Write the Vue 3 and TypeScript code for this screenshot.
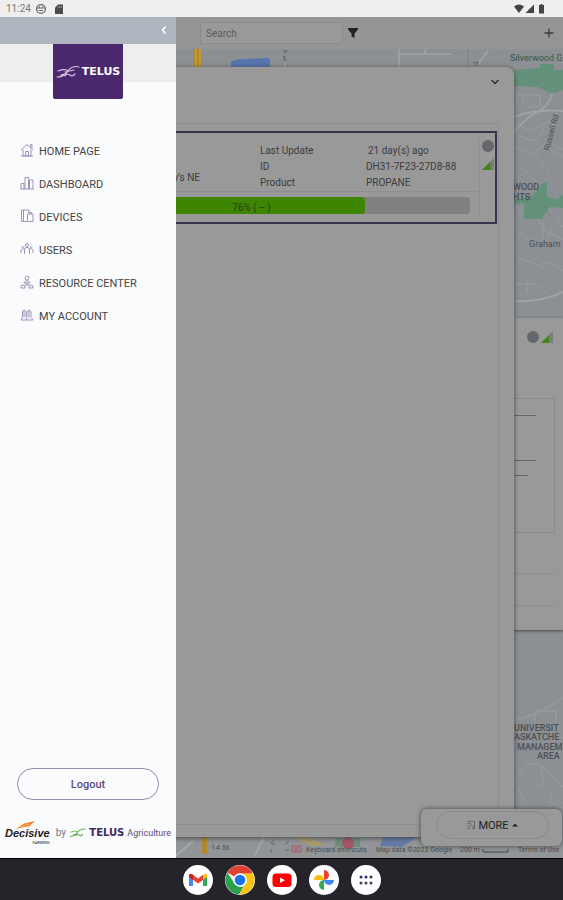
<script setup lang="ts">
import { ref } from 'vue'

interface MenuItem {
  label: string
  icon: string
}

const menu: MenuItem[] = [
  { label: 'HOME PAGE', icon: 'M1 7 7 1.500 13 7M10.500 4V1.500H12V5.500M3 6.500V13H11V6.500M5.500 13V8.500H8.500V13M1 13H13' },
  { label: 'DASHBOARD', icon: 'M1 13V7.500H4V13M5 13V1.500H8.500V13M9.500 13V4H13V13M0 13H14' },
  { label: 'DEVICES', icon: 'M7 12.500H1.500V1H9V4M3.500 1V12M7.500 5H13V12.500H7.500ZM9 5V3.500H11.500V5' },
  { label: 'USERS', icon: 'M5.500 3A1.500 1.500 0 1 0 8.500 3A1.500 1.500 0 1 0 5.500 3M4.500 12V8L5 6Q7 4.500 9 6L9.500 8V12M2 4.500A1 1 0 1 0 4 4.500M10 4.500A1 1 0 1 0 12 4.500M1 11V8Q2 6 4 7M13 11V8Q12 6 10 7' },
  { label: 'RESOURCE CENTER', icon: 'M5 3A2 2 0 1 0 9 3A2 2 0 1 0 5 3M4 7.500Q7 4 10 7.500V8H4ZM7 8V10M1 13V11Q3 9 5 11V13ZM9 13V11Q11 9 13 11V13ZM5 10H9' },
  { label: 'MY ACCOUNT', icon: 'M1 12 2.500 9V4Q4 0 6 4V9L6.500 12ZM7 9V4Q9 0 11 4V9M7 12H13L11 9.500M9 3V10M4 3V9' },
]

const device = {
  address: "y's NE",
  updated: '21 day(s) ago',
  id: 'DH31-7F23-27D8-88',
  product: 'PROPANE',
  level: 76,
}

const query = ref('')
</script>

<template>
  <div class="screen">
    <header class="status">
      <span class="clock">11:24</span>
      <svg class="status-icon" viewBox="0 0 12 12"><circle cx="6" cy="6" r="4.400" fill="none" stroke="#666" stroke-width="1.300" /><path d="M2 5H10M4 7.500H8M4.500 3.500V5M7.500 3.500V5" stroke="#666" fill="none" /></svg>
      <svg class="status-icon card-icon" viewBox="0 0 12 12"><path d="M5 1.500H10V11H2V4.500Z" fill="#4b4b4b" /><path d="M5 3V5M6.700 3V5M8.400 3V5" stroke="#aaa" stroke-width=".7" /></svg>
      <svg class="signals" viewBox="0 0 34 12"><path d="M1 3.500Q6 -.5 11 3.500L6 10Z" fill="#444" /><path d="M21 1.500V10H12.500Z" fill="#444" /><path d="M26 2H27.500V1H29.500V2H31V10.500H26Z" fill="#444" /></svg>
    </header>

    <main class="stage">
      <svg class="map" viewBox="0 0 563 841" preserveAspectRatio="xMaxYMin slice">
        <rect width="563" height="841" fill="#8c9094" />
        <path d="M193 32H202V50H193Z" fill="#b28a2c" />
        <path d="M196 32V50M200 32V50" stroke="#d0a63d" stroke-width="1" />
        <path d="M231 50V45Q235 42 246 42L268 41 270 43V50Z" fill="#5874ad" />
        <path d="M285 50V46M399 50V32M399 37H452M425 37V32M477 48 488 34" stroke="#a0a3a6" stroke-width="1.500" fill="none" />
        <path d="M283 34H287L284 37M283 40H286M284 40V43H287M473 46 478 45 476 49" stroke="#5c5f63" fill="none" />
        <path d="M468 32V50" stroke="#7d8185" />
        <path d="M514 53 540 51V47H554V53H563V73L552 77 538 70 514 69Z" fill="#64917a" />
        <path d="M514 100Q535 92 563 94M514 115Q524 103 534 97 551 88 552 76M514 284Q540 286 563 275" stroke="#a0a3a5" stroke-width="2" fill="none" />
        <path d="M517 87V78H540V90M523 80V86M528 90H538M514 107 530 113 551 104M518 119 535 124 544 113M514 130 530 137 543 129 563 139M536 139 550 155M552 127 563 132M522 151 536 164M543 205V221L534 234M553 211 547 222M517 214 535 225M518 240 545 251M541 246H553M516 267H535L547 276M552 246 563 254M527 264V276M555 197 563 210M516 190 536 200 545 214 563 222" stroke="#999da0" fill="none" />
        <path d="M514 182 533 178 543 166 547 165V180L557 182 563 178V191L549 190 542 202H524V186L514 187Z" fill="#64917a" />
        <path d="M514 184H530L540 178 546 191 550 200" stroke="#55816c" stroke-dasharray="2 2" fill="none" />
        <text x="510" y="44" class="green">Silverwood G</text>
        <text x="513" y="173" class="area">WOOD</text>
        <text x="513" y="183" class="area">HTS</text>
        <text x="529" y="230">Graham</text>
        <text x="549" y="134" class="road" transform="rotate(-75 549 134)">Russell Rd</text>
        <path d="M514 704 540 695 563 681M514 700 526 702M535 704V694H556V704M514 763 529 746 541 748 563 770M541 748 543 766 534 771M553 775 549 785 563 791M517 770 525 785" stroke="#9a9da0" fill="none" stroke-width="1" />
        <text x="514" y="714" class="area">UNIVERSIT</text>
        <text x="514" y="723" class="area">ASKATCHE</text>
        <text x="517" y="733" class="area">MANAGEM</text>
        <text x="537" y="742" class="area">AREA</text>
        <rect y="820" width="563" height="21" fill="#929597" />
        <path d="M202 820H207V837H202Z" fill="#b28a2c" />
        <path d="M292 820H310L326 829H312Z" fill="#a99a69" /><path d="M335 821H360V830H335Z" fill="#708d7b" /><circle cx="348" cy="826" r="6" fill="#a65666" /><path d="M383 820H417L402 830 380 829Z" fill="#657ba7" />
        <path d="M176 839 193 824M255 838 264 820" stroke="#a5a5a5" stroke-width="2" />
        <text x="211" y="833" class="tiny">14 St</text>
        <path d="M275 822 271 826 275 828M271 832V836M289 824 285 828M285 833H289" stroke="#666" fill="none" />
        <path d="M292 829H301V835H292ZM294 831H299M294 833H299" stroke="#a65666" fill="none" />
        <text x="306" y="835" class="legal">Keyboard shortcuts</text>
        <text x="376" y="835" class="legal">Map data ©2023 Google</text>
        <text x="460" y="835" class="legal">200 m</text>
        <path d="M483 832V835H508V832" stroke="#444" fill="none" />
        <text x="518" y="835" class="legal">Terms of Use</text>
      </svg>

      <div class="detail-layer">
        <section class="detail">
          <div class="detail-head">
            <i class="dot" />
            <svg class="bars" viewBox="0 0 12 12"><path d="M12 0V12H0Z" fill="#7d7d7d" /><path d="M8 4V12H0Z" fill="#3f8519" /></svg>
          </div>
          <div class="detail-box"><i class="rule" /><i class="rule second" /><i class="rule short" /></div>
          <div class="detail-row first" />
          <div class="detail-row" />
        </section>
      </div>

      <div class="page">
        <div class="toolbar">
          <input v-model="query" class="search" type="text" placeholder="Search" aria-label="Search" />
          <button class="icon-btn" type="button" aria-label="Filter"><svg viewBox="0 0 12 12"><path d="M1 1H11V2.500L7.500 6.500V11L4.500 9.500V6.500L1 2.500Z" fill="#222" /></svg></button>
          <button class="icon-btn add" type="button" aria-label="Add"><svg viewBox="0 0 12 12"><path d="M6 1.500V10.500M1.500 6H10.500" stroke="#3c3c3c" stroke-width="1.300" /></svg></button>
        </div>

        <section class="panel">
          <div class="panel-head">
            <button class="icon-btn" type="button" aria-label="Collapse"><svg viewBox="0 0 12 12"><path d="M2.500 4 6 7.500 9.500 4" stroke="#303030" stroke-width="1.500" fill="none" /></svg></button>
          </div>
          <div class="list">
            <article class="card">
              <div class="card-main">
                <div class="facts">
                  <div class="address">{{ device.address }}</div>
                  <dl>
                    <dt>Last Update</dt><dd class="when">{{ device.updated }}</dd>
                    <dt>ID</dt><dd>{{ device.id }}</dd>
                    <dt>Product</dt><dd>{{ device.product }}</dd>
                  </dl>
                </div>
                <div class="gauge-row">
                  <div class="gauge">
                    <div class="fill" :style="{ width: device.level + '%' }" />
                    <span>{{ device.level }}% ( -- )</span>
                  </div>
                </div>
              </div>
              <div class="card-side">
                <i class="dot" />
                <svg class="bars" viewBox="0 0 12 12"><path d="M12 0V12H0Z" fill="#81767f" /><path d="M8.500 3.500V12H0Z" fill="#3f8519" /></svg>
              </div>
            </article>
          </div>
        </section>
      </div>

      <div class="more-layer">
        <div class="more-card">
          <button class="more" type="button">
            <svg class="more-icon" viewBox="0 0 8 8"><path d="M.5 .5H7.500V7.500H5M.5 2.500H3.500L7 7M.5 5H3M.5 7.500H3" stroke="#555" stroke-width=".7" fill="none" /></svg>
            MORE
            <svg class="caret" viewBox="0 0 6 4"><path d="M0 3.500 3 .5 6 3.500Z" fill="#222" /></svg>
          </button>
        </div>
      </div>

      <aside class="drawer">
        <div class="drawer-bar">
          <button class="icon-btn" type="button" aria-label="Close menu"><svg viewBox="0 0 12 12"><path d="M7.500 2.500 4.500 6 7.500 9.500" stroke="#fff" stroke-width="1.600" fill="none" /></svg></button>
        </div>
        <div class="brand-band">
          <div class="brand">
            <svg class="swoosh" viewBox="0 0 24 14"><path d="M2 6Q7 4 11 5 13 6 9 9 6 12 1 12M5 10Q11 8 14 10 16 12 19 9M9 11Q12 4 17 2 20 1 23 2M9 7 18 5" stroke="#d6c3e1" stroke-width="1.200" fill="none" stroke-linecap="round" /></svg>
            <span>TELUS</span>
          </div>
        </div>
        <nav class="menu">
          <a v-for="item in menu" :key="item.label" href="#">
            <svg viewBox="0 0 14 14"><path :d="item.icon" fill="none" stroke="#a093b8" /></svg>
            <span>{{ item.label }}</span>
          </a>
        </nav>
        <div class="drawer-foot">
          <button class="logout" type="button">Logout</button>
          <div class="credit">
            <div class="decisive">
              <svg viewBox="0 0 20 8"><path d="M0 8 8 2.500 19 0 13 5.500 8 6Z" fill="#ee8136" /><path d="M4 6 13 3" stroke="#f7b13c" /></svg>
              <b>Decisive</b>
              <small>FARMING</small>
            </div>
            <span class="by">by</span>
            <svg class="swoosh" viewBox="0 0 24 14"><path d="M2 6Q7 4 11 5 13 6 9 9 6 12 1 12" stroke="#83c464" stroke-width="1.500" fill="none" /><path d="M5 10Q11 8 14 10 16 12 19 9M9 11Q12 4 17 2 20 1 23 2" stroke="#58a844" stroke-width="1.400" fill="none" /></svg>
            <b class="telus">TELUS</b>
            <span class="agri">Agriculture</span>
          </div>
        </div>
      </aside>
    </main>

    <footer class="dock">
      <button type="button" aria-label="Gmail"><svg viewBox="0 0 30 30"><path d="M6 11V21H10V14Z" fill="#4285f4" /><path d="M24 11V21H20V14Z" fill="#34a853" /><path d="M20 10.500 22 8.500Q24 8 24 11V12L20 15Z" fill="#fbbc04" /><path d="M6 12V10.500Q6.500 8 9 9L15 13.500 20 9.800V15L15 18.500Z" fill="#ea4335" /><path d="M6 12V10.500Q6.500 8 10 9.800V15Z" fill="#c5221f" /></svg></button>
      <button type="button" aria-label="Chrome"><svg viewBox="0 0 30 30"><path d="M15 15 2.400 7.500A14.500 14.500 0 0 1 28 8.500L15 9Z" fill="#df4135" /><path d="M15 8.500H28A14.500 14.500 0 0 1 14 29.500L20.600 18Z" fill="#fbc318" /><path d="M2.400 7.500 9.400 18.200 15 21.500H18.500L14 29.500A14.500 14.500 0 0 1 2.400 7.500Z" fill="#2da04b" /><circle cx="15" cy="15" r="6.800" fill="#fff" /><circle cx="15" cy="15" r="5.300" fill="#1a73e8" /></svg></button>
      <button type="button" aria-label="YouTube"><svg viewBox="0 0 30 30"><rect x="5.500" y="8.500" width="19" height="13.500" rx="3.500" fill="#f00" /><path d="M13 12.500V18L18 15.250Z" fill="#fff" /></svg></button>
      <button type="button" aria-label="Photos"><svg viewBox="0 0 30 30"><path d="M15 15V5A5 5 0 0 1 15 15Z" fill="#ea4335" /><path d="M15 15H25A5 5 0 0 1 15 15Z" fill="#4285f4" /><path d="M15 15V25A5 5 0 0 1 15 15Z" fill="#34a853" /><path d="M15 15H5A5 5 0 0 1 15 15Z" fill="#fbbc04" /></svg></button>
      <button type="button" aria-label="All apps"><svg viewBox="0 0 30 30"><g fill="#26316f"><circle cx="10" cy="12" r="1.500" /><circle cx="15" cy="12" r="1.500" /><circle cx="20" cy="12" r="1.500" /></g><g fill="#3b4357"><circle cx="10" cy="18" r="1.500" /><circle cx="15" cy="18" r="1.500" /><circle cx="20" cy="18" r="1.500" /></g></svg></button>
    </footer>
  </div>
</template>

<style>
body {
  background: #25242a;
}
</style>

<style scoped>
.screen {
  display: flex;
  flex-direction: column;
  min-height: 100vh;
  font-family: Roboto, 'Liberation Sans', sans-serif;
  font-size: 10px;
  color: #3c3c3c;
}
.screen * {
  box-sizing: border-box;
}
svg {
  display: block;
}
button {
  padding: 0;
  border: 0;
  background: none;
  font: inherit;
  color: inherit;
  cursor: pointer;
}
.status {
  display: flex;
  align-items: center;
  gap: 4px;
  height: 17px;
  padding: 0 16px 0 6px;
  background: #efefef;
}
.clock {
  font-size: 10px;
  color: #777;
}
.status-icon {
  width: 12px;
  height: 12px;
}
.card-icon {
  margin-left: 2px;
}
.signals {
  width: 34px;
  height: 12px;
  margin-left: auto;
}
.stage {
  flex: 1;
  display: grid;
  grid-template: minmax(0, 1fr) / minmax(0, 1fr);
  position: relative;
  overflow: hidden;
}
.stage > * {
  grid-area: 1 / 1;
}
.map {
  position: absolute;
  width: 100%;
  height: 100%;
}
.map text {
  font-size: 9px;
  fill: #4c4f52;
}
.map .green {
  fill: #34584a;
}
.map .road,
.map .tiny {
  font-size: 8px;
}
.map .area {
  font-size: 9px;
  font-weight: 500;
}
.map .legal {
  font-size: 7px;
  fill: #4a4c4f;
}
.icon-btn {
  width: 12px;
  height: 12px;
}
.dot {
  display: block;
  width: 12px;
  height: 12px;
  border-radius: 50%;
  background: #65676a;
}
.bars {
  width: 12px;
  height: 12px;
}
.detail-layer {
  display: flex;
  flex-direction: column;
  padding-top: 301px;
}
.detail {
  position: relative;
  padding: 13px 8px 24px;
  background: #999;
  box-shadow: 0 1px 3px #444;
}
.detail-head {
  display: flex;
  justify-content: flex-end;
  gap: 2px;
  padding-right: 2px;
}
.detail-box {
  display: flex;
  flex-direction: column;
  align-items: flex-end;
  height: 135px;
  margin-top: 55px;
  padding: 16px 18px;
  border: 1px solid #8a8a8a;
}
.rule {
  width: 100%;
  height: 1px;
  background: #666;
}
.rule.second {
  margin-top: 44px;
}
.rule.short {
  margin-top: 14px;
  width: 95%;
  margin-right: 8px;
}
.detail-row {
  height: 32px;
  border-bottom: 1px solid #8c8c8c;
}
.detail-row.first {
  height: 41px;
}
.page {
  position: relative;
  display: flex;
  flex-direction: column;
}
.toolbar {
  display: flex;
  align-items: center;
  gap: 4px;
  height: 32px;
  padding: 0 8px 0 200px;
  background: #959595;
}
.search {
  width: 143px;
  height: 22px;
  padding: 0 5px;
  border: 1px solid #8a8a8a;
  border-radius: 2px;
  background: #999;
  font: inherit;
  color: #333;
}
.search::placeholder {
  color: #5c5c5c;
  opacity: 1;
}
.add {
  margin-left: auto;
}
.panel {
  flex: 1;
  display: flex;
  flex-direction: column;
  margin: 18px 49px 21px 0;
  padding: 0 15px 12px 3px;
  border-radius: 0 8px 3px 0;
  background: #999;
  box-shadow: 0 1px 5px #3f4245;
}
.panel-head {
  display: flex;
  justify-content: flex-end;
  height: 56px;
  padding: 9px 0 0;
}
.panel-head .icon-btn {
  margin-right: -2px;
}
.list {
  flex: 1;
  padding: 7px 1px 7px 2px;
  border: 1px solid #8f8f8f;
}
.card {
  display: flex;
  padding-left: 16px;
  border: 2px solid #37344f;
}
.card-main {
  flex: 1;
  padding: 10px 0 8px;
}
.facts {
  display: flex;
  justify-content: flex-end;
  gap: 60px;
}
.address {
  align-self: flex-end;
  line-height: 26px;
}
dl {
  display: grid;
  grid-template-columns: 106px 113px;
  margin: 0;
  line-height: 16px;
}
dd {
  margin: 0;
}
.when {
  padding-left: 2px;
}
.gauge-row {
  padding: 5px 9px 0;
  border-top: 1px solid #8f8f8f;
}
.gauge {
  display: grid;
  height: 17px;
  border-radius: 4px;
  background: #808080;
  overflow: hidden;
}
.gauge > * {
  grid-area: 1 / 1;
}
.fill {
  border-radius: 4px;
  background: #3e8600;
}
.gauge span {
  place-self: center;
  padding-top: 3px;
  color: #263d18;
}
.card-side {
  display: flex;
  flex-direction: column;
  align-items: center;
  gap: 6px;
  width: 16px;
  margin: 7px 0;
  border-left: 1px solid #8f8f8f;
}
.more-layer {
  position: relative;
  display: flex;
  align-items: flex-end;
  justify-content: flex-end;
  padding: 0 1px 12px;
  pointer-events: none;
}
.more-card {
  padding: 2px 13px 7px 15px;
  border-radius: 6px;
  background: #999;
  box-shadow: 0 0 5px #3f4245;
  pointer-events: auto;
}
.more {
  display: flex;
  align-items: center;
  justify-content: center;
  gap: 3px;
  width: 113px;
  height: 28px;
  border: 1px solid #8a8a8a;
  border-radius: 14px;
  font-size: 11px;
  color: #222;
}
.more-icon {
  width: 8px;
  height: 8px;
}
.caret {
  width: 6px;
  height: 4px;
}
.drawer {
  position: relative;
  display: flex;
  flex-direction: column;
  width: 176px;
  background: #fafbfd;
}
.drawer-bar {
  display: flex;
  justify-content: flex-end;
  height: 27px;
  padding: 7px 6px;
  background: #b0b6bf;
}
.brand-band {
  display: flex;
  justify-content: center;
  align-items: flex-start;
  height: 38px;
  background: #eee;
}
.brand {
  display: flex;
  align-items: center;
  justify-content: center;
  gap: 2px;
  width: 70px;
  height: 55px;
  border-radius: 0 0 2px 2px;
  background: #4b286d;
  color: #fff;
  font: bold 11px 'DejaVu Sans', sans-serif;
}
.swoosh {
  width: 24px;
  height: 14px;
}
.menu {
  display: flex;
  flex-direction: column;
  padding: 53px 20px 0;
}
.menu a {
  display: flex;
  align-items: center;
  gap: 5px;
  height: 33px;
  font-size: 11px;
  color: #444;
  text-decoration: none;
}
.menu svg {
  width: 14px;
  height: 14px;
  margin-bottom: 4px;
}
.drawer-foot {
  display: flex;
  flex-direction: column;
  gap: 20px;
  margin-top: auto;
  padding-bottom: 13px;
}
.logout {
  height: 32px;
  margin: 0 17px;
  border: 1px solid #9787ae;
  border-radius: 16px;
  font-size: 11px;
  font-weight: 500;
  color: #5b4a7c;
}
.credit {
  display: flex;
  align-items: center;
  height: 25px;
  padding: 0 5px;
  gap: 3px;
  line-height: 12px;
  white-space: nowrap;
}
.decisive {
  display: flex;
  flex-direction: column;
  align-items: flex-end;
  color: #222;
}
.decisive svg {
  width: 20px;
  height: 8px;
  margin: 0 14px -2px 0;
}
.decisive b {
  font: italic bold 11px/13px 'Liberation Sans', sans-serif;
}
.decisive small {
  font-size: 4px;
  line-height: 5px;
}
.by {
  margin-left: 3px;
  color: #777;
}
.credit .swoosh {
  width: 20px;
  height: 12px;
}
.telus {
  font: bold 10px 'DejaVu Sans', sans-serif;
  color: #3c2763;
}
.agri {
  font-size: 9px;
  color: #5a4b75;
}
.dock {
  display: flex;
  align-items: center;
  justify-content: center;
  gap: 12px;
  height: 42px;
  border-top: 1px solid #000;
  background: #25242a;
}
.dock button {
  width: 30px;
  height: 30px;
  border-radius: 50%;
  background: #fff;
  overflow: hidden;
}
</style>
